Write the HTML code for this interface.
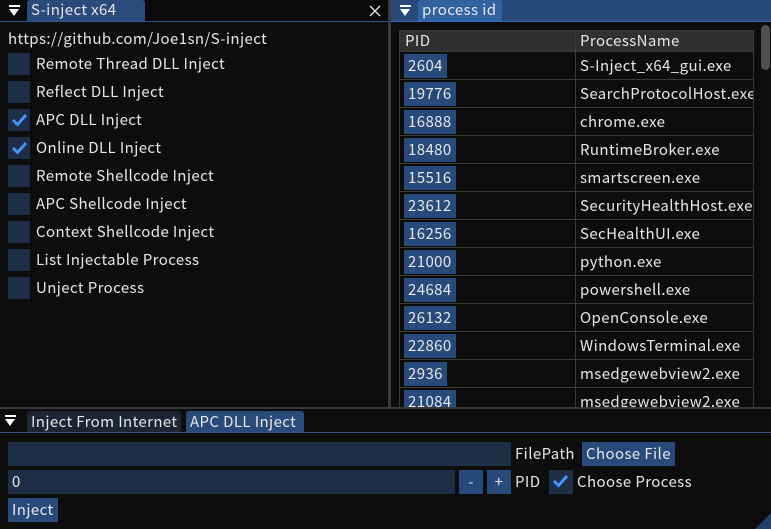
<!DOCTYPE html>
<html><head><meta charset="utf-8"><style>
*{margin:0;padding:0;box-sizing:border-box}
body{width:771px;height:529px;background:#0d0d0d;overflow:hidden;position:relative;font-family:"Noto Sans CJK SC","Liberation Sans",sans-serif;font-size:15px;color:#e6e6e6;line-height:1;letter-spacing:0.4px}
.a{position:absolute}
.t{position:absolute;white-space:nowrap;line-height:20px}
.cb{position:absolute;width:22px;height:22px;background:#1f2e47;left:8px}
.cb svg{position:absolute;left:3px;top:4px}
.btn{position:absolute;background:#284a7a;height:24px;line-height:24px;padding:0 4px;white-space:nowrap}
.tri{position:absolute;width:0;height:0;border-left:5px solid transparent;border-right:5px solid transparent;border-top:7px solid #fff}
.row{position:absolute;left:399px;width:355px;height:28px;border-bottom:1px solid #3a3a3a}
</style></head><body>
<div class="a" style="left:0;top:0;width:388px;height:21px;background:#0a0a0a"></div>
<div class="a" style="left:27px;top:0;width:118px;height:21px;background:#294a7a;border-radius:3px 3px 0 0"></div>
<div class="a" style="left:9px;top:5px;width:11px;height:2px;background:#fff"></div>
<div class="tri" style="left:9px;top:9px"></div>
<div class="t" style="left:31px;top:0">S-inject x64</div>
<svg class="a" style="left:369px;top:5px" width="12" height="12"><path d="M1 1 L11 11 M11 1 L1 11" stroke="#e6e6e6" stroke-width="1.3"/></svg>
<div class="a" style="left:0;top:21px;width:388px;height:1px;background:#2f5585"></div>
<div class="t" style="left:8px;top:29px">https://github.com/Joe1sn/S-inject</div>
<div class="cb" style="top:53px"></div><div class="t" style="left:36px;top:54px">Remote Thread DLL Inject</div>
<div class="cb" style="top:81px"></div><div class="t" style="left:36px;top:82px">Reflect DLL Inject</div>
<div class="cb" style="top:109px"><svg width="17" height="14"><path d="M2 7 L6.5 11.5 L15 2" stroke="#4296fa" stroke-width="3" fill="none"/></svg></div><div class="t" style="left:36px;top:110px">APC DLL Inject</div>
<div class="cb" style="top:137px"><svg width="17" height="14"><path d="M2 7 L6.5 11.5 L15 2" stroke="#4296fa" stroke-width="3" fill="none"/></svg></div><div class="t" style="left:36px;top:138px">Online DLL Inject</div>
<div class="cb" style="top:165px"></div><div class="t" style="left:36px;top:166px">Remote Shellcode Inject</div>
<div class="cb" style="top:193px"></div><div class="t" style="left:36px;top:194px">APC Shellcode Inject</div>
<div class="cb" style="top:221px"></div><div class="t" style="left:36px;top:222px">Context Shellcode Inject</div>
<div class="cb" style="top:249px"></div><div class="t" style="left:36px;top:250px">List Injectable Process</div>
<div class="cb" style="top:277px"></div><div class="t" style="left:36px;top:278px">Unject Process</div>
<div class="a" style="left:388px;top:0;width:3px;height:409px;background:#3a3a3a"></div>
<div class="a" style="left:0;top:407px;width:771px;height:2px;background:#3a3a3a"></div>
<div class="a" style="left:391px;top:0;width:380px;height:21px;background:#29497a"></div>
<div class="a" style="left:418px;top:0;width:84px;height:21px;background:#3163a3;border-radius:3px 3px 0 0"></div>
<div class="a" style="left:400px;top:5px;width:11px;height:2px;background:#fff"></div>
<div class="tri" style="left:400px;top:9px"></div>
<div class="t" style="left:422px;top:0">process id</div>
<div class="a" style="left:391px;top:21px;width:380px;height:1px;background:#3a6ab0"></div>
<div class="a" style="left:761px;top:25px;width:9px;height:45px;background:#4f4f4f;border-radius:5px"></div>
<div class="a" style="left:399px;top:30px;width:355px;height:378px;border-left:1px solid #3a3a3a;border-right:1px solid #3a3a3a"></div>
<div class="a" style="left:399px;top:30px;width:355px;height:22px;background:#303030;border:1px solid #3a3a3a"></div>
<div class="a" style="left:575px;top:30px;width:1px;height:378px;background:#3a3a3a"></div>
<div class="t" style="left:405px;top:31px">PID</div>
<div class="t" style="left:580px;top:31px">ProcessName</div>
<div class="row" style="top:52px"></div><div class="btn" style="left:404px;top:54px">2604</div><div class="t" style="left:580px;top:56px">S-Inject_x64_gui.exe</div>
<div class="row" style="top:80px"></div><div class="btn" style="left:404px;top:82px">19776</div><div class="t" style="left:580px;top:84px;width:173px;overflow:hidden">SearchProtocolHost.exe</div>
<div class="row" style="top:108px"></div><div class="btn" style="left:404px;top:110px">16888</div><div class="t" style="left:580px;top:112px">chrome.exe</div>
<div class="row" style="top:136px"></div><div class="btn" style="left:404px;top:138px">18480</div><div class="t" style="left:580px;top:140px">RuntimeBroker.exe</div>
<div class="row" style="top:164px"></div><div class="btn" style="left:404px;top:166px">15516</div><div class="t" style="left:580px;top:168px">smartscreen.exe</div>
<div class="row" style="top:192px"></div><div class="btn" style="left:404px;top:194px">23612</div><div class="t" style="left:580px;top:196px;width:173px;overflow:hidden">SecurityHealthHost.exe</div>
<div class="row" style="top:220px"></div><div class="btn" style="left:404px;top:222px">16256</div><div class="t" style="left:580px;top:224px">SecHealthUI.exe</div>
<div class="row" style="top:248px"></div><div class="btn" style="left:404px;top:250px">21000</div><div class="t" style="left:580px;top:252px">python.exe</div>
<div class="row" style="top:276px"></div><div class="btn" style="left:404px;top:278px">24684</div><div class="t" style="left:580px;top:280px">powershell.exe</div>
<div class="row" style="top:304px"></div><div class="btn" style="left:404px;top:306px">26132</div><div class="t" style="left:580px;top:308px">OpenConsole.exe</div>
<div class="row" style="top:332px"></div><div class="btn" style="left:404px;top:334px">22860</div><div class="t" style="left:580px;top:336px">WindowsTerminal.exe</div>
<div class="row" style="top:360px"></div><div class="btn" style="left:404px;top:362px">2936</div><div class="t" style="left:580px;top:364px">msedgewebview2.exe</div>
<div class="a" style="left:399px;top:388px;width:355px;height:19px;overflow:hidden"><div class="btn" style="left:5px;top:2px">21084</div><div class="t" style="left:181px;top:4px">msedgewebview2.exe</div></div>
<div class="a" style="left:0;top:409px;width:771px;height:120px;background:#0d0d0d"></div>
<div class="a" style="left:27px;top:411px;width:154px;height:21px;background:#1b2535;border-radius:3px 3px 0 0"></div>
<div class="a" style="left:186px;top:411px;width:118px;height:21px;background:#294a7a;border-radius:3px 3px 0 0"></div>
<div class="a" style="left:5px;top:415px;width:11px;height:2px;background:#fff"></div>
<div class="tri" style="left:5px;top:419px"></div>
<div class="t" style="left:31px;top:412px">Inject From Internet</div>
<div class="t" style="left:190px;top:412px">APC DLL Inject</div>
<div class="a" style="left:0;top:432px;width:771px;height:1px;background:#2f5585"></div>
<div class="a" style="left:8px;top:442px;width:503px;height:24px;background:#1f2e47"></div>
<div class="t" style="left:515px;top:444px">FilePath</div>
<div class="btn" style="left:582px;top:442px">Choose File</div>
<div class="a" style="left:8px;top:470px;width:447px;height:24px;background:#1f2e47"></div>
<div class="t" style="left:12px;top:472px">0</div>
<div class="btn" style="left:459px;top:470px;width:24px;text-align:center">-</div>
<div class="btn" style="left:487px;top:470px;width:24px;text-align:center">+</div>
<div class="t" style="left:515px;top:472px">PID</div>
<div class="cb" style="left:549px;top:470px;width:24px;height:24px"><svg width="17" height="14"><path d="M2 7 L6.5 11.5 L15 2" stroke="#4296fa" stroke-width="3" fill="none"/></svg></div>
<div class="t" style="left:577px;top:472px">Choose Process</div>
<div class="btn" style="left:8px;top:498px">Inject</div>
<svg class="a" style="left:755px;top:513px" width="16" height="16"><path d="M16 0 L16 16 L0 16 Z" fill="#23406a"/></svg>
</body></html>
